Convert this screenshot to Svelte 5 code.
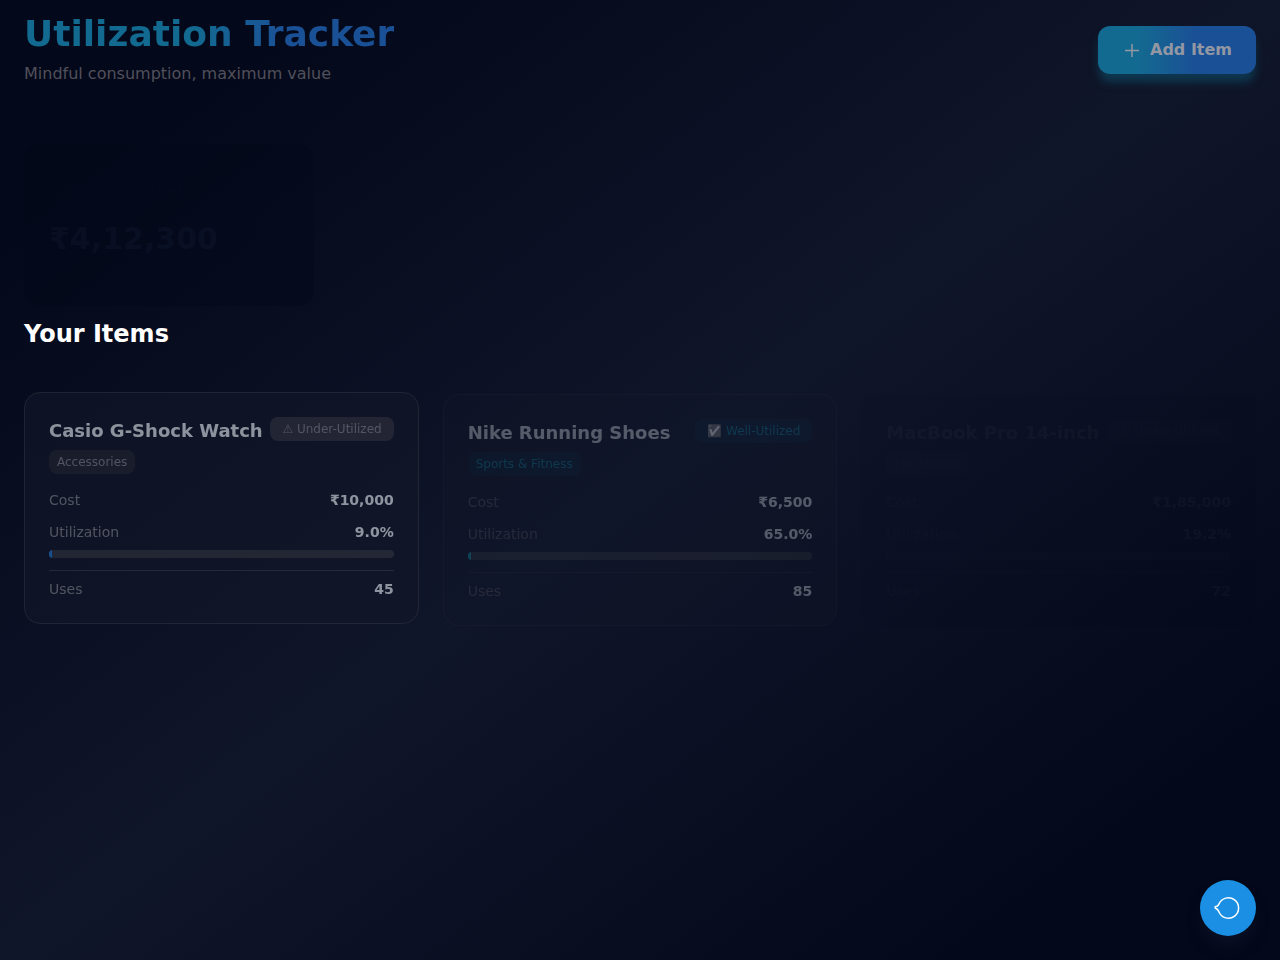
<script lang="ts">
  interface Item {
    name: string;
    category: string;
    cost: string;
    utilization: string;
    uses: number;
    progress: number;
    status: 'under' | 'well';
    stage: 'shown' | 'entering' | 'waiting';
  }

  const items: Item[] = [
    { name: 'Casio G-Shock Watch', category: 'Accessories', cost: '₹10,000', utilization: '9.0%', uses: 45, progress: 1, status: 'under', stage: 'shown' },
    { name: 'Nike Running Shoes', category: 'Sports & Fitness', cost: '₹6,500', utilization: '65.0%', uses: 85, progress: 1, status: 'well', stage: 'entering' },
    { name: 'MacBook Pro 14-inch', category: 'Electronics', cost: '₹1,85,000', utilization: '19.2%', uses: 72, progress: 0, status: 'under', stage: 'waiting' }
  ];
</script>

<div class="page">
  <header class="header">
    <div>
      <h1>Utilization Tracker</h1>
      <p class="subtitle">Mindful consumption, maximum value</p>
    </div>
    <button class="add-btn">
      <svg width="20" height="20" viewBox="0 0 20 20" fill="none" stroke="currentColor" stroke-width="1.5">
        <path d="M10 4v13M3 10.500h14" />
      </svg>
      Add Item
    </button>
  </header>

  <section class="stats">
    <div class="stat">
      <div class="stat-label">Total Value Tracked</div>
      <div class="stat-value">₹4,12,300</div>
    </div>
  </section>

  <h2>Your Items</h2>

  <section class="items">
    {#each items as item (item.name)}
      <article class="card {item.stage}">
        <div class="card-head">
          <h3>{item.name}</h3>
          <span class="badge {item.status}">
            {#if item.status === 'well'}
              <span class="mark">✅</span> Well-Utilized
            {:else}
              ⚠ Under-Utilized
            {/if}
          </span>
        </div>
        <span class="category {item.status}">{item.category}</span>
        <div class="row">
          <span>Cost</span>
          <strong>{item.cost}</strong>
        </div>
        <div class="row">
          <span>Utilization</span>
          <strong>{item.utilization}</strong>
        </div>
        <div class="track">
          <div class="fill {item.status}" style="width: {item.progress}%"></div>
        </div>
        <div class="row uses">
          <span>Uses</span>
          <strong>{item.uses}</strong>
        </div>
      </article>
    {/each}
  </section>

  <button class="fab" aria-label="Open chat">
    <svg width="28" height="28" viewBox="0 0 28 28" fill="none" stroke="currentColor" stroke-width="1.5" stroke-linejoin="round">
      <path d="M5 10A10.200 10.200 0 1 1 5 18L3.500 15.500L1.200 14V12.800L3.500 12z" />
    </svg>
  </button>
</div>

<style>
  :global(body) {
    margin: 0;
    background: #03091a;
  }

  .page {
    box-sizing: border-box;
    min-height: 100vh;
    padding: 14px 24px 24px;
    background: linear-gradient(to bottom right, #03091a 12%, #101629 50%, #03091a 88%);
    color: #fff;
    font-family: 'DejaVu Sans', sans-serif;
  }

  h1,
  h2,
  h3,
  p {
    margin: 0;
  }

  .header {
    display: flex;
    align-items: center;
    justify-content: space-between;
  }

  h1 {
    font-size: 36px;
    line-height: 40px;
    color: transparent;
    background: linear-gradient(90deg, #136a90 45%, #1a5196 70%);
    background-clip: text;
  }

  .subtitle {
    margin-top: 8px;
    font-size: 16px;
    line-height: 24px;
    color: #52505a;
  }

  .add-btn {
    display: flex;
    align-items: center;
    gap: 8px;
    padding: 12px 24px;
    border: none;
    border-radius: 12px;
    background: linear-gradient(90deg, #136a90 25%, #1a5196 60%);
    box-shadow: 0 9px 9px -1px #0e3850;
    color: #9297a3;
    font: bold 16px/24px 'DejaVu Sans', sans-serif;
    cursor: pointer;
  }

  .stats {
    display: grid;
    grid-template-columns: repeat(4, 1fr);
    gap: 24px;
    margin-top: 58px;
  }

  .stat {
    box-sizing: border-box;
    min-height: 162px;
    padding: 37px 25px;
    border-radius: 16px;
    background: #030819;
    color: #11172c;
    opacity: 0.4;
  }

  .stat-label {
    color: #070b1c;
    font-size: 14px;
    line-height: 20px;
  }

  .stat-value {
    margin-top: 20px;
    font-size: 30px;
    font-weight: 700;
    line-height: 36px;
  }

  h2 {
    margin-top: 12px;
    font-size: 24px;
    line-height: 32px;
  }

  .items {
    display: grid;
    grid-template-columns: repeat(3, 1fr);
    align-items: start;
    gap: 24px;
    margin-top: 42px;
  }

  .card {
    padding: 24px;
    border: 1px solid #31333f;
    border-radius: 16px;
    background: #121829;
    opacity: 0.6;
  }

  .card.entering {
    margin-top: 2px;
    border-color: #222634;
    opacity: 0.33;
  }

  .card.waiting {
    margin-top: 2px;
    border-color: transparent;
    background: #040a1b;
    opacity: 0.02;
  }

  .card-head {
    display: flex;
    align-items: flex-start;
    justify-content: space-between;
    margin-bottom: 5px;
  }

  h3 {
    font-size: 18px;
    line-height: 28px;
    color: #e7eaf1;
    white-space: nowrap;
  }

  .badge,
  .category {
    display: inline-block;
    padding: 4px 8px;
    border-radius: 8px;
    background: #252733;
    color: #84828a;
    font-size: 12px;
    line-height: 16px;
    white-space: nowrap;
  }

  .badge {
    padding: 4px 12px;
    background: #333340;
  }

  .badge.well,
  .category.well {
    background: #0f2238;
    color: #0d8098;
  }

  .mark {
    filter: grayscale(1) brightness(0.8) contrast(2.4);
  }

  .row {
    display: flex;
    justify-content: space-between;
    margin-top: 12px;
    color: #84828a;
    font-size: 14px;
    line-height: 20px;
  }

  .entering .row {
    color: #54545e;
  }

  .category + .row {
    margin-top: 16px;
  }

  .row strong {
    color: #e7eaf1;
  }

  .track {
    height: 8px;
    margin-top: 8px;
    border-radius: 4px;
    background: #33353f;
    overflow: hidden;
  }

  .fill {
    height: 100%;
    background: #247bdc;
  }

  .fill.well {
    background: #0fa0b8;
  }

  .uses {
    padding-top: 8px;
    border-top: 1px solid #373a45;
  }

  .entering .uses {
    border-color: #242835;
  }

  .fab {
    position: fixed;
    right: 24px;
    bottom: 24px;
    display: flex;
    align-items: center;
    justify-content: center;
    width: 56px;
    height: 56px;
    padding: 0;
    border: none;
    border-radius: 50%;
    background: #1a8fe3;
    box-shadow: 0 12px 16px -4px #0c1226;
    color: #fff;
    cursor: pointer;
  }
</style>
